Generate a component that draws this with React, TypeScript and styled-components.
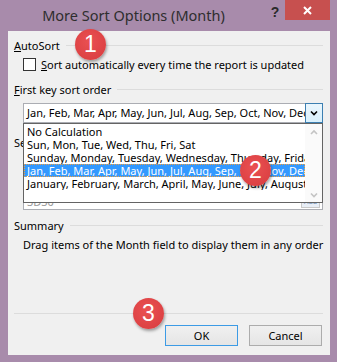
import styled, { createGlobalStyle } from "styled-components";

const GlobalStyle = createGlobalStyle`
  html, body {
    margin: 0;
    padding: 0;
    background: #a88bab;
  }
  body {
    font-family: "Noto Sans", "Open Sans", "DejaVu Sans", sans-serif;
  }
`;

const Window = styled.div`
  position: relative;
  width: 337px;
  height: 362px;
  background: #a88bab;
  display: flex;
  flex-direction: column;
  overflow: hidden;
`;

const TitleBar = styled.div`
  height: 31px;
  display: flex;
  align-items: flex-start;
  flex-shrink: 0;
`;

const Title = styled.div`
  flex: 1;
  height: 31px;
  line-height: 31px;
  text-align: center;
  font-size: 14.5px;
  color: #2e2e2e;
  padding-left: 2px;
`;

const HelpButton = styled.div`
  width: 20px;
  height: 24px;
  line-height: 24px;
  text-align: center;
  font-family: "Liberation Sans", sans-serif;
  font-weight: bold;
  font-size: 14px;
  color: #2a2a2a;
`;

const CloseButton = styled.div`
  width: 45px;
  height: 20px;
  margin-right: 7px;
  background: #c7504f;
  display: flex;
  align-items: center;
  justify-content: center;
`;

const Body = styled.div`
  flex: 1;
  margin: 0 7px 7px 8px;
  background: #f0f0f0;
  padding: 7px 7px 0 6px;
  display: flex;
  flex-direction: column;
  font-size: 11px;
  color: #000;
`;

const Header = styled.div<{ $top: number }>`
  display: flex;
  align-items: center;
  gap: 6px;
  height: 14px;
  margin-top: ${(p) => p.$top}px;
  white-space: nowrap;

  &::after {
    content: "";
    flex: 1;
    height: 1px;
    background: #dcdcdc;
  }
`;

const Indented = styled.div<{ $top: number }>`
  margin-left: 9px;
  margin-top: ${(p) => p.$top}px;
`;

const CheckRow = styled.label`
  display: flex;
  align-items: center;
  gap: 5px;
  height: 15px;
  white-space: nowrap;
`;

const CheckBox = styled.span`
  width: 11px;
  height: 11px;
  border: 1px solid #333;
  background: #fff;
  flex-shrink: 0;
`;

const ComboWrap = styled.div`
  position: relative;
  height: 20px;
`;

const Combo = styled.div`
  height: 20px;
  box-sizing: border-box;
  border: 1px solid #abadb3;
  background: #fff;
  display: flex;
  align-items: stretch;
`;

const ComboText = styled.div`
  flex: 1;
  overflow: hidden;
  white-space: nowrap;
  padding-left: 3px;
  line-height: 18px;
`;

const ComboButton = styled.div`
  width: 16px;
  margin: -1px -1px -1px 0;
  border: 1px solid #3c7fb1;
  background: linear-gradient(#eaf6fd, #d9f0fc);
  display: flex;
  align-items: center;
  justify-content: center;
`;

const List = styled.div`
  position: absolute;
  top: 20px;
  left: 0;
  right: 0;
  height: 80px;
  box-sizing: border-box;
  border: 1px solid #646464;
  background: #fff;
  display: flex;
  z-index: 2;
`;

const Items = styled.div`
  flex: 1;
  overflow: hidden;
  padding-top: 1px;
`;

const Item = styled.div<{ $selected?: boolean }>`
  height: 13px;
  line-height: 13px;
  padding-left: 3px;
  white-space: nowrap;
  overflow: hidden;
  box-sizing: border-box;
  background: ${(p) => (p.$selected ? "#3399ff" : "transparent")};
  color: ${(p) => (p.$selected ? "#fff" : "#000")};
  outline: ${(p) => (p.$selected ? "1px dotted #f0a040" : "none")};
  outline-offset: -1px;
`;

const ScrollBar = styled.div`
  width: 17px;
  background: #fafafa;
  display: flex;
  flex-direction: column;
  justify-content: space-between;
  align-items: center;
  padding: 5px 0 4px;
`;

const FieldRow = styled.div`
  height: 17px;
  box-sizing: border-box;
  border: 1px solid #abadb3;
  background: #fff;
  display: flex;
  align-items: center;
  justify-content: space-between;
  padding: 0 2px 0 3px;
  color: #9a9a9a;
`;

const SmallButton = styled.span`
  width: 17px;
  height: 10px;
  border: 1px solid #c8c8c8;
  background: #e8eef6;
  font-size: 7px;
  line-height: 10px;
  text-align: center;
  color: #7090b8;
`;

const SummaryText = styled.div`
  margin-left: 9px;
  margin-top: 6px;
  height: 14px;
  line-height: 14px;
  white-space: nowrap;
`;

const Footer = styled.div`
  margin-top: auto;
  border-top: 1px solid #dcdcdc;
  padding: 11px 1px 9px 0;
  display: flex;
  justify-content: flex-end;
  gap: 11px;
`;

const Button = styled.div<{ $default?: boolean }>`
  width: 73px;
  height: 21px;
  box-sizing: border-box;
  border: 1px solid ${(p) => (p.$default ? "#3c9be5" : "#acacac")};
  background: linear-gradient(#f0f0f0, #e5e5e5);
  display: flex;
  align-items: center;
  justify-content: center;
  font-size: 11px;
`;

const Badge = styled.div<{ $x: number; $y: number }>`
  position: absolute;
  left: ${(p) => p.$x}px;
  top: ${(p) => p.$y}px;
  width: 31px;
  height: 31px;
  border-radius: 50%;
  background: radial-gradient(circle at 45% 40%, #ea5052, #d73c3e);
  box-shadow: 1px 2px 3px rgba(0, 0, 0, 0.35);
  color: #fff;
  font-family: "Liberation Sans", sans-serif;
  font-size: 23px;
  line-height: 31px;
  text-align: center;
  z-index: 5;
`;

const Chevron = ({ color, up }: { color: string; up?: boolean }) => (
  <svg width="8" height="6" viewBox="0 0 8 6">
    <path
      d={up ? "M1 5 L4 2 L7 5" : "M1 1.5 L4 4.5 L7 1.5"}
      fill="none"
      stroke={color}
      strokeWidth="1.6"
    />
  </svg>
);

const items = [
  "No Calculation",
  "Sun, Mon, Tue, Wed, Thu, Fri, Sat",
  "Sunday, Monday, Tuesday, Wednesday, Thursday, Friday, Saturday",
  "Jan, Feb, Mar, Apr, May, Jun, Jul, Aug, Sep, Oct, Nov, Dec",
  "January, February, March, April, May, June, July, August, September",
];

export default function App() {
  return (
    <Window>
      <GlobalStyle />
      <TitleBar>
        <Title>More Sort Options (Month)</Title>
        <HelpButton>?</HelpButton>
        <CloseButton>
          <svg width="9" height="9" viewBox="0 0 9 9">
            <path d="M1 1 L8 8 M8 1 L1 8" stroke="#fff" strokeWidth="2" />
          </svg>
        </CloseButton>
      </TitleBar>
      <Body>
        <Header $top={0}>
          <span>
            <u>A</u>utoSort
          </span>
        </Header>
        <Indented $top={5}>
          <CheckRow>
            <CheckBox />
            <span>
              <u>S</u>ort automatically every time the report is updated
            </span>
          </CheckRow>
        </Indented>
        <Header $top={10}>
          <span>
            <u>F</u>irst key sort order
          </span>
        </Header>
        <Indented $top={7}>
          <ComboWrap>
            <Combo>
              <ComboText>
                Jan, Feb, Mar, Apr, May, Jun, Jul, Aug, Sep, Oct, Nov, Dec
              </ComboText>
              <ComboButton>
                <Chevron color="#000" />
              </ComboButton>
            </Combo>
            <List>
              <Items>
                {items.map((it, i) => (
                  <Item key={it} $selected={i === 3}>
                    {it}
                  </Item>
                ))}
              </Items>
              <ScrollBar>
                <Chevron color="#c4c4c4" up />
                <Chevron color="#c4c4c4" />
              </ScrollBar>
            </List>
          </ComboWrap>
        </Indented>
        <Header $top={12}>
          <span>Second key sort order</span>
        </Header>
        <Indented $top={44}>
          <FieldRow>
            <span>3D30</span>
            <SmallButton>Add</SmallButton>
          </FieldRow>
        </Indented>
        <Header $top={8}>
          <span>Summary</span>
        </Header>
        <SummaryText>
          Drag items of the Month field to display them in any order
        </SummaryText>
        <Footer>
          <Button $default>OK</Button>
          <Button>Cancel</Button>
        </Footer>
      </Body>
      <Badge $x={75} $y={29}>1</Badge>
      <Badge $x={240} $y={155}>2</Badge>
      <Badge $x={133} $y={298}>3</Badge>
    </Window>
  );
}
